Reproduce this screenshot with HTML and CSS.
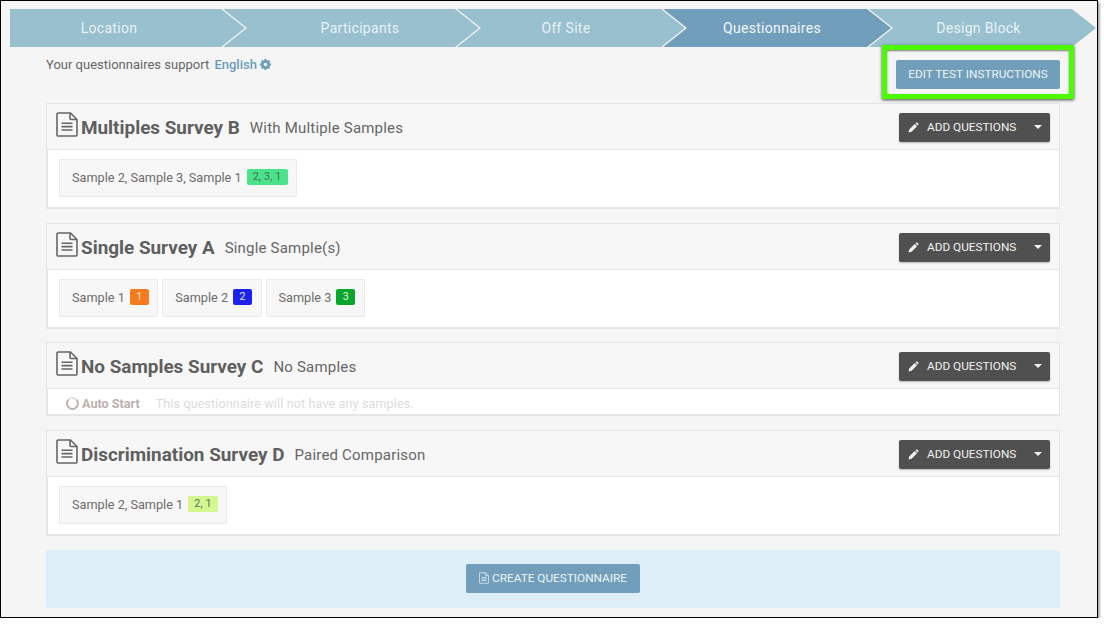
FILE: index.html
```html
<!DOCTYPE html>
<html lang="en">
<head>
<meta charset="utf-8">
<title>Questionnaires</title>
<link rel="stylesheet" href="styles.css">
</head>
<body>
<svg class="defs" width="0" height="0" aria-hidden="true">
  <symbol id="file" viewBox="0 0 22 25">
    <path d="M2.2 1h12.3L21 7.500v15.300a1.200 1.200 0 0 1-1.200 1.200H2.200A1.200 1.200 0 0 1 1 22.800V2.200A1.200 1.200 0 0 1 2.200 1z" fill="none" stroke="currentColor" stroke-width="1.6"/>
    <path d="M14 1.200v5.300a1 1 0 0 0 1 1h5.800" fill="none" stroke="currentColor" stroke-width="1.6"/>
    <path d="M5.500 11.200h11M5.500 14.600h11M5.500 18h11" stroke="currentColor" stroke-width="1.6"/>
  </symbol>
  <symbol id="pencil" viewBox="0 0 12 12">
    <path d="M0.600 11.400l.7-3.300 6-6 2.600 2.600-6 6zM8.100 1.500l.8-.8a1 1 0 0 1 1.400 0l1 1a1 1 0 0 1 0 1.400l-.8.8z" fill="currentColor"/>
  </symbol>
  <symbol id="gear" viewBox="0 0 12 12">
    <path fill-rule="evenodd" d="M5 .5h2l.3 1.400 1 .4L9.500 1.500 11 3l-.8 1.200.4 1 1.400.3v2l-1.400.3-.4 1 .8 1.200-1.500 1.500-1.200-.8-1 .4L7 12.500H5l-.3-1.400-1-.4-1.200.8L1 10l.8-1.200-.4-1L0 7.500v-2l1.400-.3.4-1L1 3l1.500-1.500 1.200.8 1-.4zM6 4.500a2 2 0 1 0 0 4 2 2 0 0 0 0-4z" fill="currentColor" transform="translate(0 -.5)"/>
  </symbol>
</svg>

<div class="window">
  <nav class="steps">
    <div class="step step-first">Location</div>
    <div class="step step-wide">Participants</div>
    <div class="step">Off Site</div>
    <div class="step step-active">Questionnaires</div>
    <div class="step step-last">Design Block</div>
  </nav>

  <main class="main">
    <div class="toolbar">
      <p class="support">Your questionnaires support <a class="lang">English <svg class="gear"><use href="#gear"/></svg></a></p>
      <div class="highlight-wrap">
        <button class="btn btn-blue btn-edit">EDIT TEST INSTRUCTIONS</button>
        <span class="highlight"></span>
      </div>
    </div>

    <section class="panel">
      <header class="panel-head">
        <svg class="file"><use href="#file"/></svg>
        <h2 class="title">Multiples Survey B</h2>
        <span class="subtitle">With Multiple Samples</span>
        <div class="btn btn-dark"><svg class="pencil"><use href="#pencil"/></svg><span>ADD QUESTIONS</span><i class="caret"></i></div>
      </header>
      <div class="panel-body">
        <div class="chip">Sample 2, Sample 3, Sample 1 <span class="badge badge-mint">2, 3, 1</span></div>
      </div>
    </section>

    <section class="panel panel-tight">
      <header class="panel-head">
        <svg class="file"><use href="#file"/></svg>
        <h2 class="title">Single Survey A</h2>
        <span class="subtitle">Single Sample(s)</span>
        <div class="btn btn-dark"><svg class="pencil"><use href="#pencil"/></svg><span>ADD QUESTIONS</span><i class="caret"></i></div>
      </header>
      <div class="panel-body">
        <div class="chip">Sample 1 <span class="badge badge-orange">1</span></div>
        <div class="chip">Sample 2 <span class="badge badge-blue">2</span></div>
        <div class="chip">Sample 3 <span class="badge badge-green">3</span></div>
      </div>
    </section>

    <section class="panel">
      <header class="panel-head">
        <svg class="file"><use href="#file"/></svg>
        <h2 class="title">No Samples Survey C</h2>
        <span class="subtitle">No Samples</span>
        <div class="btn btn-dark"><svg class="pencil"><use href="#pencil"/></svg><span>ADD QUESTIONS</span><i class="caret"></i></div>
      </header>
      <div class="panel-body panel-body-slim">
        <i class="ring"></i><strong class="auto">Auto Start</strong>
        <span class="muted">This questionnaire will not have any samples.</span>
      </div>
    </section>

    <section class="panel">
      <header class="panel-head">
        <svg class="file"><use href="#file"/></svg>
        <h2 class="title">Discrimination Survey D</h2>
        <span class="subtitle">Paired Comparison</span>
        <div class="btn btn-dark"><svg class="pencil"><use href="#pencil"/></svg><span>ADD QUESTIONS</span><i class="caret"></i></div>
      </header>
      <div class="panel-body">
        <div class="chip">Sample 2, Sample 1 <span class="badge badge-lime">2, 1</span></div>
      </div>
    </section>

    <div class="create">
      <button class="btn btn-blue btn-create"><svg class="file-small"><use href="#file"/></svg>CREATE QUESTIONNAIRE</button>
    </div>
  </main>
</div>
</body>
</html>
```
FILE: styles.css
```css
* { box-sizing: border-box; }

html, body { margin: 0; padding: 0; background: #fff; }

body {
  font-family: Roboto, "Liberation Sans", sans-serif;
  color: #666;
  overflow: hidden;
}

.defs { display: block; height: 0; }

.window {
  width: 1098px;
  height: 618px;
  background: #f5f5f5;
  border: 1px solid #000;
  box-shadow: 1px 2px 3px rgba(0, 0, 0, .55);
  padding-top: 8px;
}

/* Steps */
.steps {
  display: flex;
  height: 38px;
  margin-left: 9px;
}

.step {
  flex: none;
  width: 228px;
  height: 38px;
  margin-left: -22px;
  padding-right: 10px;
  background: #98c0cf;
  color: #e9f2f5;
  font-size: 14px;
  line-height: 38px;
  text-align: center;
  letter-spacing: .3px;
  clip-path: polygon(0 0, calc(100% - 24px) 0, 100% 50%, calc(100% - 24px) 100%, 0 100%, 24px 50%);
}

.step-first {
  width: 235px;
  margin-left: 0;
  padding-right: 37px;
  clip-path: polygon(0 0, calc(100% - 24px) 0, 100% 50%, calc(100% - 24px) 100%, 0 100%);
}

.step-wide {
  width: 256px;
  padding-right: 0;
  padding-left: 18px;
}

.step-last { width: 227px; padding-right: 8px; }

.step-active { background: #719fbb; color: #f2f6f9; }

/* Toolbar */
.main { padding: 0 37px 0 45px; }

.toolbar {
  display: flex;
  justify-content: space-between;
  align-items: flex-start;
  height: 56px;
}

.support {
  margin: 11px 0 0;
  font-size: 13px;
  line-height: 14px;
  color: #666;
}

.lang {
  margin-left: 2px;
  color: #6a9dbb;
  font-weight: 500;
}

.gear {
  width: 11px;
  height: 11px;
  vertical-align: -0.5px;
}

.highlight-wrap {
  position: relative;
  margin-top: 13px;
}

.highlight {
  position: absolute;
  left: -14px;
  right: -14px;
  top: -15px;
  bottom: -10px;
  border: 5px solid #4cfb00;
  box-shadow: 0 1px 3px rgba(0, 0, 0, .7), inset 0 1px 2px rgba(0, 0, 0, .5);
}

/* Buttons */
.btn {
  display: flex;
  align-items: center;
  height: 29px;
  border: 0;
  border-radius: 2px;
  font-family: inherit;
  font-size: 11.8px;
}

.btn-blue { background: #719fbb; color: #eef4f7; }

.btn-edit {
  width: 164px;
  justify-content: center;
  padding: 0 0 2px;
}

.btn-dark {
  margin-left: auto;
  width: 151px;
  padding-left: 9px;
  background: #505050;
  color: #f1f1f1;
  box-shadow: 0 1px 2px rgba(0, 0, 0, .25);
}

.pencil { width: 11px; height: 11px; margin-right: 8px; }

.caret {
  margin-left: 18px;
  border-top: 4px solid #f1f1f1;
  border-left: 4px solid transparent;
  border-right: 4px solid transparent;
}

/* Panels */
.panel {
  margin-bottom: 14px;
  border: 1px solid #e6e6e6;
  border-bottom-width: 2px;
}

.panel-tight { margin-bottom: 13px; }

.panel-head {
  display: flex;
  align-items: center;
  height: 46px;
  padding: 1px 9px 0;
  background: #f7f7f7;
  border-bottom: 1px solid #e6e6e6;
}

.file {
  flex: none;
  width: 22px;
  height: 25px;
  color: #666;
  margin-right: 3px;
  margin-top: -5px;
}

.title {
  margin: 0;
  font-size: 18.9px;
  font-weight: 700;
  color: #5f5f5f;
}

.subtitle {
  margin-left: 10px;
  font-size: 15px;
  color: #666;
  letter-spacing: .2px;
  padding-top: 2px;
}

.panel-body {
  display: flex;
  gap: 4px;
  height: 57px;
  padding: 9px 11px;
  background: #fff;
  border-left: 1px solid #e6e6e6;
}

.panel-body-slim {
  height: 25px;
  padding: 3px 0 0 18px;
  align-items: center;
  gap: 0;
}

.chip {
  display: flex;
  align-items: center;
  gap: 5px;
  height: 38px;
  padding: 0 8.500px 2px 12px;
  background: #f7f7f7;
  border: 1px solid #ebebeb;
  border-radius: 1px;
  font-size: 12.7px;
  color: #6c6c6c;
}

.badge {
  min-width: 19px;
  height: 16px;
  padding: 0 6px;
  border-radius: 2px;
  font-size: 10.700px;
  line-height: 16px;
  letter-spacing: .2px;
  text-align: center;
}

.badge-mint { background: #4be38a; color: #4a6a5a; }
.badge-lime { background: #d5f78f; color: #5a6a60; }
.badge-orange { background: #f77a1f; color: #fbe5d0; }
.badge-blue { background: #1c22ee; color: #e8e9ff; }
.badge-green { background: #08a62a; color: #e4f7e8; }

.ring {
  width: 13px;
  height: 13px;
  margin-right: 3px;
  border: 2px solid #bcb0ae;
  border-top-color: #e4e0df;
  border-radius: 50%;
}

.auto { color: #bcb0ae; font-weight: 700; font-size: 12.600px; }

.muted { margin-left: 16px; color: #dcdcdc; font-size: 12.500px; letter-spacing: .15px; }

/* Create */
.create {
  display: flex;
  justify-content: center;
  align-items: center;
  height: 58px;
  padding-bottom: 2px;
  background: #deeef7;
  border-radius: 2px;
}

.btn-create {
  width: 174px;
  justify-content: center;
  padding: 0;
}

.file-small { width: 10px; height: 12px; margin-right: 3px; }
```
